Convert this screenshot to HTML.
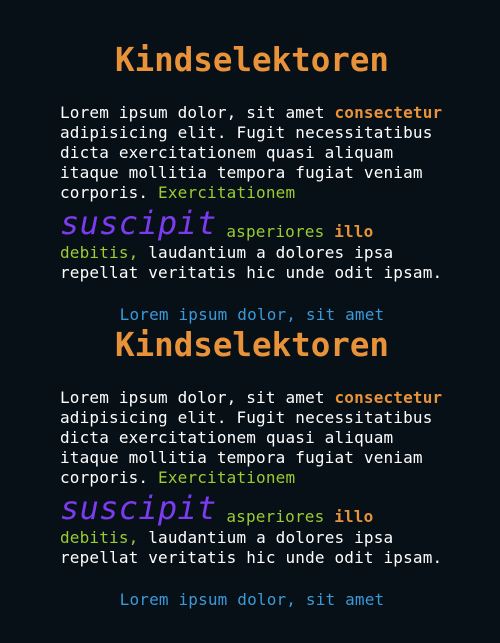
<!DOCTYPE html>
<html><head><meta charset="utf-8"><style>
html,body{margin:0;padding:0;background:#070f17;width:500px;height:643px;overflow:hidden}
body{font-family:"DejaVu Sans Mono","Liberation Mono",monospace;color:#fff;position:relative}
.blk{position:absolute;left:0;width:500px}
h1{position:absolute;top:40px;left:0;width:500px;margin:0;text-align:center;font-size:32.5px;line-height:40px;color:#e8923a;font-weight:bold;font-family:"DejaVu Sans Mono",monospace;padding-left:4px;box-sizing:border-box}
.p{position:absolute;left:60px;top:103px;font-size:16px;line-height:20px;white-space:pre;letter-spacing:0.17px}
.o{color:#e8923a;font-weight:bold}
.g{color:#9acd32}
.s{display:block;height:40px;line-height:40px}
.s i{font-size:32px;color:#7b3bf0;vertical-align:0px;letter-spacing:0.3px}
.s span{vertical-align:-3px}
.b{position:absolute;top:305px;left:0;width:500px;text-align:center;color:#3a9ad9;font-size:16px;line-height:20px;letter-spacing:0.17px;padding-left:4px;box-sizing:border-box}
</style></head><body>
<div class="blk" style="top:0">
<h1>Kindselektoren</h1>
<div class="p">Lorem ipsum dolor, sit amet <span class="o">consectetur</span>
adipisicing elit. Fugit necessitatibus
dicta exercitationem quasi aliquam
itaque mollitia tempora fugiat veniam
corporis. <span class="g">Exercitationem</span>
<span class="s"><i>suscipit</i> <span class="g">asperiores</span> <span class="o">illo</span></span><span class="g">debitis,</span> laudantium a dolores ipsa
repellat veritatis hic unde odit ipsam.</div>
<div class="b">Lorem ipsum dolor, sit amet</div>
</div>
<div class="blk" style="top:285px">
<h1>Kindselektoren</h1>
<div class="p">Lorem ipsum dolor, sit amet <span class="o">consectetur</span>
adipisicing elit. Fugit necessitatibus
dicta exercitationem quasi aliquam
itaque mollitia tempora fugiat veniam
corporis. <span class="g">Exercitationem</span>
<span class="s"><i>suscipit</i> <span class="g">asperiores</span> <span class="o">illo</span></span><span class="g">debitis,</span> laudantium a dolores ipsa
repellat veritatis hic unde odit ipsam.</div>
<div class="b">Lorem ipsum dolor, sit amet</div>
</div>
</body></html>
